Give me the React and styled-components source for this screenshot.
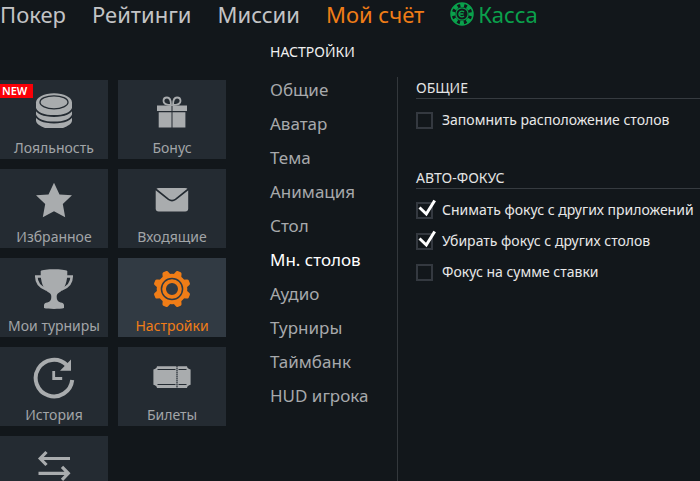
import { useState } from 'react';
import styled, { createGlobalStyle } from 'styled-components';

const GlobalStyle = createGlobalStyle`
  * {
    box-sizing: border-box;
  }
  body {
    background-color: #12171b;
    color: #a7a9ac;
    font-family: 'Noto Sans', 'Open Sans', sans-serif;
    margin: 0;
  }
`;

const Page = styled.div`
  display: flex;
  flex-direction: column;
  height: 100vh;
  overflow: hidden;
`;
const Nav = styled.nav`
  align-items: center;
  display: flex;
  flex-shrink: 0;
  gap: 26px;
  height: 28px;
  white-space: nowrap;
`;
const NavLink = styled.a`
  align-items: center;
  color: ${(props) => props.$color || '#c3c4c6'};
  display: flex;
  font-size: 22px;
  gap: 4px;
  line-height: 28px;
  text-decoration: none;
`;
const Content = styled.main`
  display: flex;
  flex: 1;
  gap: 44px;
  min-height: 0;
`;
const Tiles = styled.div`
  align-content: start;
  display: grid;
  flex-shrink: 0;
  gap: 10px;
  grid-template-columns: 108px 108px;
  padding-top: 52px;
`;
const Tile = styled.button`
  align-items: center;
  background-color: ${(props) => (props.$active ? '#313a43' : '#242b32')};
  border: none;
  color: ${(props) => (props.$active ? '#f07d17' : '#a2a5a8')};
  cursor: pointer;
  display: flex;
  flex-direction: column;
  font-family: inherit;
  font-size: 14px;
  height: 79px;
  line-height: 20px;
  padding: 8px 0 0;
  position: relative;
  white-space: nowrap;
`;
const TileIcon = styled.svg`
  color: ${(props) => (props.$active ? '#f07d17' : '#a9acae')};
  display: block;
  flex-shrink: 0;
  height: 44px;
  margin-bottom: 6px;
  width: 48px;
`;
const Badge = styled.span`
  background-color: #fb0007;
  color: white;
  font-size: 11px;
  font-weight: 600;
  left: 0;
  line-height: 14px;
  padding: 0 6px 0 2px;
  position: absolute;
  top: 4px;
`;

const Settings = styled.div`
  display: flex;
  flex: 1;
  flex-direction: column;
  min-width: 0;
  padding-top: 12px;
`;
const Title = styled.h1`
  color: #f0f0f0;
  font-size: 14px;
  font-weight: 400;
  line-height: 24px;
  margin: 0 0 13px;
`;
const Columns = styled.div`
  display: flex;
  flex: 1;
  min-height: 0;
`;
const Menu = styled.nav`
  border-right: 1px solid #33383c;
  display: flex;
  flex-direction: column;
  flex-shrink: 0;
  gap: 10px;
  padding-top: 1px;
  width: 128px;
`;
const MenuLink = styled.a`
  color: ${(props) => (props.$active ? '#ffffff' : '#a7a9ac')};
  font-size: 17px;
  line-height: 24px;
  text-decoration: none;
`;
const Panel = styled.div`
  display: flex;
  flex: 1;
  flex-direction: column;
  gap: 37px;
  min-width: 0;
  padding-left: 18px;
`;
const Group = styled.section`
  display: flex;
  flex-direction: column;
  gap: 11px;
`;
const GroupTitle = styled.h2`
  border-bottom: 1px solid #363b40;
  color: #e4e4e4;
  font-size: 14px;
  font-weight: 400;
  line-height: 21px;
  margin: 0;
`;
const Option = styled.label`
  align-items: center;
  color: #e8e8e8;
  cursor: pointer;
  display: flex;
  font-size: 14px;
  gap: 9px;
  line-height: 20px;
  white-space: nowrap;
`;
const Box = styled.span`
  display: flex;
  position: relative;
`;
const Checkbox = styled.input`
  appearance: none;
  border: 2px solid #343940;
  height: 17px;
  margin: 0;
  width: 17px;
`;
const Check = styled.svg`
  display: none;
  height: 22px;
  left: 0;
  pointer-events: none;
  position: absolute;
  top: -4px;
  width: 22px;

  ${Checkbox}:checked + & {
    display: block;
  }
`;

const teeth = [22.5, 67.5, 112.5, 157.5, 202.5, 247.5, 292.5, 337.5];

const icons = {
  loyalty: (
    <>
      <path
        d='M6 14.5v18c0 3 4 5.500 9 7.500h18c5-2 9-4.500 9-7.500v-18z'
        fill='currentColor'
      />
      <ellipse cx='24' cy='14.5' rx='18' ry='9.200' fill='currentColor' />
      <g fill='none' stroke='#242b32'>
        <ellipse cx='24' cy='14.300' rx='14' ry='6.500' strokeWidth='1.3' />
        <path
          d='M5 20c2 5 9 8 19 8s17-3 19-8M5 26.500c2 5 9 8 19 8s17-3 19-8'
          strokeWidth='1.9'
        />
      </g>
    </>
  ),
  bonus: (
    <>
      <g fill='none' stroke='currentColor' strokeWidth='1.8'>
        <path d='M23 17c-4 0-7.500-.5-7.500-4 0-2 1.500-3.500 3.500-3.500 3 0 4 3 4 7.500z' />
        <path d='M25 17c4 0 7.500-.5 7.500-4 0-2-1.500-3.500-3.500-3.500-3 0-4 3-4 7.500z' />
      </g>
      <path
        d='M9 17.500h14.500v5.500H9zM24.500 17.500H39v5.500H24.500zM10.700 24.200h12.800v15.200H10.700zM24.500 24.200h12.900v15.200H24.500z'
        fill='currentColor'
      />
    </>
  ),
  favorites: (
    <path
      d='M24 5.800l5.500 11.700L42 18.200l-9.200 8.800L35.200 40.200 24 34.300 12.800 40.200l2.400-13.200L6 18.200l12.500-.7z'
      fill='currentColor'
    />
  ),
  inbox: (
    <>
      <rect x='7.700' y='11' width='32.500' height='23.500' rx='3' fill='currentColor' />
      <path
        d='M7.500 12l13 10.300c2.300 1.700 4.700 1.700 7 0L40.500 12'
        fill='none'
        stroke='#242b32'
        strokeWidth='1.6'
      />
    </>
  ),
  tournaments: (
    <>
      <path
        d='M10.700 5c3-2.200 23.600-2.200 26.600 0 .3 11-2.300 18.500-8.800 22-1.500 1-1.800 2-1.800 4 0 3 1 4.500 4 5.500 2 .4 3 1 3.300 2.500v3c-4 1.200-16 1.200-20 0v-3c.3-1.500 1.300-2.100 3.300-2.500 3-1 4-2.500 4-5.500 0-2-.3-3-1.800-4-6.500-3.500-9.100-11-8.800-22z'
        fill='currentColor'
      />
      <path
        d='M12 10.500H6.300c0 6 3 10.500 10.200 13M36 10.500h5.700c0 6-3 10.500-10.200 13'
        fill='none'
        stroke='currentColor'
        strokeWidth='2.600'
      />
    </>
  ),
  settings: (
    <>
      <g fill='currentColor' transform='translate(24 23)'>
        {teeth.map((angle) => (
          <path
            key={angle}
            d='M-4.500-13l1.300-4.200q.4-1.500 1.600-1.500h3.200q1.200 0 1.600 1.500L4.500-13z'
            transform={`rotate(${angle})`}
          />
        ))}
      </g>
      <g fill='none' stroke='currentColor'>
        <circle cx='24' cy='23' r='13.300' strokeWidth='4' />
        <circle cx='24' cy='23' r='7.900' strokeWidth='3.800' />
      </g>
    </>
  ),
  history: (
    <>
      <path
        d='M42.200 25a18.300 18.300 0 1 1-5.400-15'
        fill='none'
        stroke='currentColor'
        strokeWidth='4'
      />
      <path d='M41 4.500v11.300H30z' fill='currentColor' />
      <path
        d='M23.700 16v7.500h8.500'
        fill='none'
        stroke='currentColor'
        strokeWidth='2.800'
      />
    </>
  ),
  tickets: (
    <>
      <path
        d='M9 11.300h30q.3 2.500 3.600 3.200v15.300q-3.300.7-3.600 3.200H9q-.3-2.500-3.600-3.200V14.500Q8.700 13.800 9 11.300z'
        fill='currentColor'
      />
      <g fill='none' stroke='#242b32' strokeWidth='1.200'>
        <path d='M9.500 14.500h18M30.500 14.500h8M9.500 29.500h18M30.500 29.500h8' />
        <path d='M29 11v22' strokeDasharray='1.500 .5' />
      </g>
    </>
  ),
  transfers: (
    <path
      d='M40 14.500H11M16.500 8l-6.300 6.500 6.300 6.500M8.500 29.300h29M32 22.800l6.300 6.500-6.300 6.500'
      fill='none'
      stroke='currentColor'
      strokeWidth='3.200'
    />
  ),
};

const tiles = [
  { icon: 'loyalty', label: 'Лояльность', badge: 'NEW' },
  { icon: 'bonus', label: 'Бонус' },
  { icon: 'favorites', label: 'Избранное' },
  { icon: 'inbox', label: 'Входящие' },
  { icon: 'tournaments', label: 'Мои турниры' },
  { icon: 'settings', label: 'Настройки', active: true },
  { icon: 'history', label: 'История' },
  { icon: 'tickets', label: 'Билеты' },
  { icon: 'transfers', label: '' },
];

const menu = [
  'Общие',
  'Аватар',
  'Тема',
  'Анимация',
  'Стол',
  'Мн. столов',
  'Аудио',
  'Турниры',
  'Таймбанк',
  'HUD игрока',
];

const groups = [
  {
    title: 'ОБЩИЕ',
    options: [{ label: 'Запомнить расположение столов', checked: false }],
  },
  {
    title: 'АВТО-ФОКУС',
    options: [
      { label: 'Снимать фокус с других приложений', checked: true },
      { label: 'Убирать фокус с других столов', checked: true },
      { label: 'Фокус на сумме ставки', checked: false },
    ],
  },
];

const Chip = () => (
  <svg width='24' height='24' viewBox='0 0 24 24' fill='none' stroke='#0aa14c'>
    <circle cx='12' cy='12' r='11' strokeWidth='1.500' />
    <circle
      cx='12'
      cy='12'
      r='9'
      strokeWidth='4'
      strokeDasharray='4.069 3'
      strokeDashoffset='2.034'
    />
    <circle cx='12' cy='12' r='6.200' strokeWidth='1.300' />
    <path d='M14 10a2.900 2.900 0 1 0 0 4M10 12h3.500' strokeWidth='1.400' />
  </svg>
);

const Setting = ({ label, checked }) => {
  const [on, setOn] = useState(checked);
  return (
    <Option>
      <Box>
        <Checkbox
          type='checkbox'
          checked={on}
          onChange={(e) => setOn(e.target.checked)}
        />
        <Check viewBox='0 0 22 22'>
          <path
            d='M3.500 9.500l6.800 6.500L18.700 2.500'
            fill='none'
            stroke='white'
            strokeWidth='3'
          />
        </Check>
      </Box>
      {label}
    </Option>
  );
};

const App = () => {
  return (
    <Page>
      <GlobalStyle />
      <Nav>
        <NavLink href='#poker'>Покер</NavLink>
        <NavLink href='#ratings'>Рейтинги</NavLink>
        <NavLink href='#missions'>Миссии</NavLink>
        <NavLink href='#account' $color='#f07d17'>
          Мой счёт
        </NavLink>
        <NavLink href='#cashier' $color='#0aa14c'>
          <Chip />
          Касса
        </NavLink>
      </Nav>
      <Content>
        <Tiles>
          {tiles.map(({ icon, label, badge, active }) => (
            <Tile key={icon} type='button' aria-label={label || icon} $active={active}>
              {badge && <Badge>{badge}</Badge>}
              <TileIcon viewBox='0 0 48 44' $active={active}>
                {icons[icon]}
              </TileIcon>
              {label}
            </Tile>
          ))}
        </Tiles>
        <Settings>
          <Title>НАСТРОЙКИ</Title>
          <Columns>
            <Menu>
              {menu.map((item) => (
                <MenuLink
                  key={item}
                  href='#settings'
                  $active={item === 'Мн. столов'}
                >
                  {item}
                </MenuLink>
              ))}
            </Menu>
            <Panel>
              {groups.map(({ title, options }) => (
                <Group key={title}>
                  <GroupTitle>{title}</GroupTitle>
                  {options.map((option) => (
                    <Setting key={option.label} {...option} />
                  ))}
                </Group>
              ))}
            </Panel>
          </Columns>
        </Settings>
      </Content>
    </Page>
  );
};

export default App;
